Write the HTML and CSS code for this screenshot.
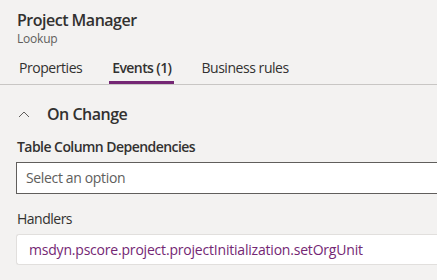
FILE: index.html
```html
<!DOCTYPE html>
<html>
<head>
<meta charset="utf-8">
<link rel="stylesheet" href="styles.css">
</head>
<body>
<div class="panel">
  <header class="head">
    <div class="title">Project Manager</div>
    <div class="subtitle">Lookup</div>
  </header>
  <nav class="tabs">
    <span class="tab">Properties</span>
    <span class="tab active">Events (1)</span>
    <span class="tab">Business rules</span>
  </nav>
  <section class="body">
    <div class="section-head">
      <svg class="chev" width="12" height="8" viewBox="0 0 12 8"><path d="M1 7 L6 2 L11 7" fill="none" stroke="#605e5c" stroke-width="1"/></svg>
      <span class="section-title">On Change</span>
    </div>
    <div class="label">Table Column Dependencies</div>
    <div class="select">Select an option</div>
    <div class="label handlers-label">Handlers</div>
    <div class="handler">msdyn.pscore.project.projectInitialization.setOrgUnit</div>
  </section>
</div>
</body>
</html>
```

FILE: styles.css
```css
html, body {
  margin: 0;
  padding: 0;
  background: #f3f2f1;
  overflow: hidden;
}
body {
  font-family: "Segoe UI", "Open Sans", sans-serif;
  color: #323130;
  width: 437px;
  height: 280px;
}
.panel {
  display: flex;
  flex-direction: column;
}
.head {
  padding: 9px 17px 0;
}
.title {
  font-size: 16px;
  font-weight: 600;
  line-height: 22px;
  letter-spacing: -0.5px;
}
.subtitle {
  font-size: 12px;
  color: #605e5c;
  line-height: 16px;
  letter-spacing: -0.2px;
}
.tabs {
  display: flex;
  padding: 11px 0 0 16px;
  border-bottom: 1px solid #c8c6c4;
}
.tab {
  font-size: 14px;
  line-height: 20px;
  padding: 0 3px 3px;
  margin-right: 24px;
  border-bottom: 3px solid transparent;
  letter-spacing: -0.45px;
}
.tab.active {
  font-weight: 600;
  border-bottom-color: #742774;
  letter-spacing: -0.6px;
}
.body {
  padding: 0 0 0 16px;
}
.section-head {
  display: flex;
  align-items: center;
  height: 30px;
  margin-top: 14px;
  padding-left: 2px;
}
.chev {
  margin-right: 17px;
}
.section-title {
  font-size: 16px;
  font-weight: 600;
  letter-spacing: -0.5px;
}
.label {
  font-size: 14px;
  font-weight: 600;
  line-height: 20px;
  margin-top: 8px;
  padding-left: 1px;
  letter-spacing: -0.55px;
}
.select {
  margin-top: 5px;
  height: 30px;
  border: 1px solid #605e5c;
  border-right: none;
  background: #fff;
  font-size: 14px;
  color: #605e5c;
  line-height: 30px;
  padding-left: 9px;
  letter-spacing: -0.35px;
}
.handlers-label {
  margin-top: 15px;
  font-weight: 500;
  letter-spacing: -0.5px;
}
.handler {
  margin-top: 5px;
  height: 29px;
  border: 1px solid #e1dfdd;
  border-right: none;
  border-radius: 3px 0 0 3px;
  background: #fff;
  color: #742774;
  font-size: 14px;
  line-height: 29px;
  padding-left: 12px;
  letter-spacing: -0.2px;
}
```
